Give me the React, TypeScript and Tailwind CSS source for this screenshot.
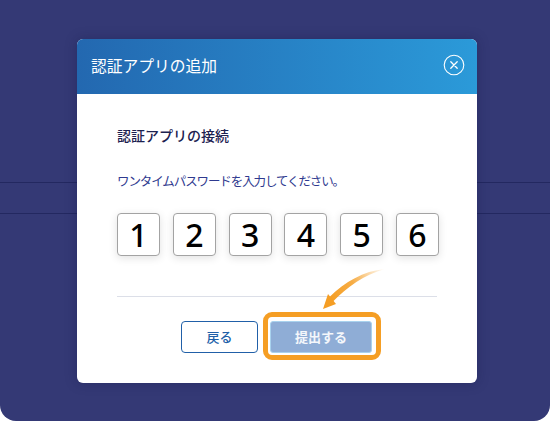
const font = { fontFamily: '"Noto Sans CJK JP", "Noto Sans", sans-serif' };

const digits = ["1", "2", "3", "4", "5", "6"];

function CloseIcon() {
  return (
    <svg className="mb-[3px]" width="22" height="22" viewBox="0 0 22 22" fill="none" stroke="white" strokeLinecap="round">
      <circle cx="11" cy="11" r="9.800" strokeWidth="1.100" />
      <path d="M7.800 7.800 14.200 14.200M14.200 7.800 7.800 14.200" strokeWidth="1.300" />
    </svg>
  );
}

function Arrow() {
  return (
    <svg className="absolute left-[50px] top-[-57px]" width="70" height="50" viewBox="0 0 70 50" fill="none">
      <defs>
        <linearGradient id="tail" x1="65" y1="5" x2="10" y2="36" gradientUnits="userSpaceOnUse">
          <stop offset="0" stopColor="#f59e24" stopOpacity="0" />
          <stop offset="0.55" stopColor="#f59e24" stopOpacity="0.85" />
          <stop offset="1" stopColor="#f59e24" />
        </linearGradient>
      </defs>
      <path d="M65 5C43 7 25 18 9.500 33L13 37.500C27 23 44 11 65 5Z" fill="url(#tail)" />
      <path d="M3 45 8 30 16 40Z" fill="#f59e24" />
    </svg>
  );
}

export default function App() {
  return (
    <div className="relative h-[421px] w-[550px] overflow-hidden bg-white" style={font}>
      <div className="h-full rounded-b-2xl bg-[#343975] pt-[182px]">
        <div className="h-[32px] border-y border-[#232860]" />
      </div>

      <div className="absolute inset-0 pl-[77px] pt-[39px]">
        <div className="h-[344px] w-[400px] overflow-hidden rounded-md bg-white shadow-[0_0_12px_rgba(20,24,70,0.35)]">
          <div className="flex h-[55px] items-center justify-between bg-gradient-to-r from-[#2368b0] to-[#2b9ad9] pl-[14px] pr-[12px]">
            <h1 className="mb-[2px] text-[15.750px] leading-6 text-white">認証アプリの追加</h1>
            <CloseIcon />
          </div>

          <div className="px-10 pt-[31px]">
            <h2 className="text-sm font-medium leading-5 text-[#1c2150]">認証アプリの接続</h2>
            <p className="mt-[28px] text-[12.500px] leading-4 tracking-[-1.100px] text-[#2f3a8f]">ワンタイムパスワードを入力してください。</p>

            <div className="mt-[24px] flex w-[322px] justify-between">
              {digits.map((d) => (
                <div
                  key={d}
                  className="flex h-[43px] w-[43px] items-center justify-center rounded-[4px] border border-[#a3a3a3] bg-white text-[32px] font-medium leading-none text-black shadow-[0_2px_8px_rgba(0,0,0,0.12)]"
                  style={{ fontFamily: '"Noto Sans", sans-serif' }}
                >
                  {d}
                </div>
              ))}
            </div>

            <div className="mt-[40px] border-t border-[#dcdfe8]" />

            <div className="ml-[64px] mt-[24px] flex gap-3">
              <button className="h-[32px] w-[77px] rounded-[4px] border border-[#2160a8] bg-white text-[13px] font-medium text-[#2160a8]">
                戻る
              </button>
              <div className="relative h-[32px] w-[102px]">
                <button className="h-full w-full rounded-[3px] border border-[#a9d2ee] bg-[#8fadd6] text-[13px] font-bold text-white/90">
                  提出する
                </button>
                <div className="absolute bottom-[-7px] left-[-7px] right-[-9px] top-[-9px] rounded-[9px] border-[5px] border-[#f59e24]" />
                <Arrow />
              </div>
            </div>
          </div>
        </div>
      </div>
    </div>
  );
}
